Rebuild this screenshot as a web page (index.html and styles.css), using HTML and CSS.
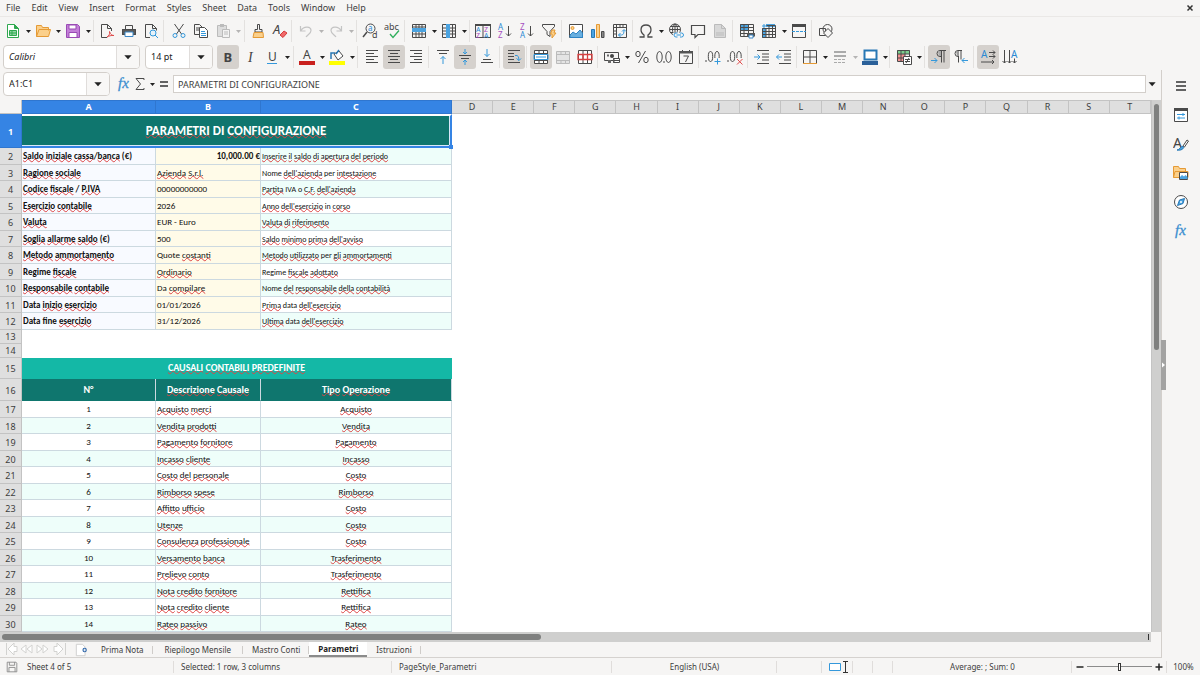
FILE: index.html
```html
<!DOCTYPE html>
<html lang="it">
<head>
<meta charset="utf-8">
<title>Parametri</title>
<link rel="stylesheet" href="styles.css">
</head>
<body>
<svg class="sprite" aria-hidden="true">
<symbol id="down" viewBox="0 0 8 16"><path class="fd" d="M2 7h5L4.500 10z"/></symbol>
<symbol id="new" viewBox="0 0 16 16"><path d="M2.500 1.500h7l4 4v9h-11z" fill="#fff" stroke="#2fa84f"/><path d="M9.500 1.500v4h4" fill="#2fa84f" stroke="#2fa84f"/><path d="M4.500 7.500h7v5h-7zM4.500 10h7M7 7.500v5" fill="#8fd6a2" stroke="#2fa84f"/></symbol>
<symbol id="open" viewBox="0 0 16 16"><path d="M1.500 13.500v-11h5l1 2h6v3M1.500 13.500l2.500-7h11.500l-2 7z" fill="#fbd08b" stroke="#e59a35"/></symbol>
<symbol id="save" viewBox="0 0 16 16"><path d="M1.500 1.500h11l2 2v11h-13z" fill="#c37fd8" stroke="#9a4bb5"/><path d="M4 2h7v4H4zM4 9.500h8v5H4z" fill="#fff" stroke="#9a4bb5"/></symbol>
<symbol id="pdf" viewBox="0 0 16 16"><path class="dk" d="M8 14.500H2.500v-13h6l4 4V8M8.500 1.500v4h4"/><path d="M8 14c2-1 3-3 2.500-5.500 1 3 2.500 4 4.500 4-3-.3-5 .5-7 1.500z" fill="none" stroke="#e04a4a"/></symbol>
<symbol id="print" viewBox="0 0 16 16"><path d="M1 6h14v6H1z" fill="#5a5a5a"/><path class="dk" d="M4.500 6V2.500h7V6M1.500 6.500h13v5h-13z"/><path d="M4 9h8v4.500H4z" fill="#fff" stroke="#3b88c8"/></symbol>
<symbol id="preview" viewBox="0 0 16 16"><path class="dk" d="M7 14.500H2.500v-13h7l4 4v2M9.500 1.500v4h4"/><circle cx="10" cy="10" r="3" fill="#e6f2fa" stroke="#3498db"/><path class="bl" d="M12 12l3 3"/></symbol>
<symbol id="cut" viewBox="0 0 16 16"><path class="dk" d="M3.500 1l7 10M12.500 1l-7 10"/><circle class="bl" cx="4" cy="12.500" r="2"/><circle class="bl" cx="12" cy="12.500" r="2"/></symbol>
<symbol id="copy" viewBox="0 0 16 16"><path class="dk" d="M6 11.500H1.500v-10h5l3 3M3 5h3M3 7h3"/><path d="M6.500 4.500h5l3 3v7h-8z" fill="#fff" stroke="#4a4a4a"/><path class="bl" d="M8 8.500h4M8 10.500h5M8 12.500h5"/></symbol>
<symbol id="paste" viewBox="0 0 16 16"><path d="M2.500 2.500h9v11h-9z" fill="#ddd" stroke="#bbb"/><path d="M5 1h4v3H5z" fill="#bbb"/><path d="M7.500 6.500h7v8h-7zM9 9h4M9 11h4" fill="#f3f3f3" stroke="#bbb"/></symbol>
<symbol id="clone" viewBox="0 0 16 16"><path class="dk" d="M7.500 1.500h2v5h2.500v2.500H5V6.500h2.500z"/><path d="M4 9.500h9l.5 5H3z" fill="#fbd08b" stroke="#e59a35"/></symbol>
<symbol id="clear" viewBox="0 0 16 16"><text x="1" y="11" class="gi" font-size="13">A</text><path d="M8 12l4-4 3 2-4 4.500z" fill="#f06a6a" stroke="#d63c3c"/></symbol>
<symbol id="undo" viewBox="0 0 16 16"><path class="lt" d="M2.500 3v5h5M3 7.500c3-5 10-4 10 0 0 3-3 4-5 6.500"/></symbol>
<symbol id="redo" viewBox="0 0 16 16"><path class="lt" d="M13.500 3v5h-5M13 7.500c-3-5-10-4-10 0 0 3 3 4 5 6.500"/></symbol>
<symbol id="find" viewBox="0 0 16 16"><circle class="dk" cx="8.500" cy="5.500" r="4.500"/><path class="dk" d="M5 9l-4 5" stroke-width="1.500"/><text x="6" y="8" class="gb" font-size="8">a</text><text x="10" y="15" class="gt" font-size="9">d</text></symbol>
<symbol id="spell" viewBox="0 0 16 16"><text x="0" y="7" class="gt" font-size="9">abc</text><path d="M6 11l3 3.500 6-7" fill="none" stroke="#2fae5c" stroke-width="1.300"/></symbol>
<symbol id="row" viewBox="0 0 16 16"><path class="dk" d="M1.500 1.500h13v13h-13zM1.500 11h13M5 1.500v13M8 1.500v13M11 1.500v13M1.500 4h13"/><path d="M1 5h14v4H1z" fill="#4ba3e0"/></symbol>
<symbol id="col" viewBox="0 0 16 16"><path class="dk" d="M1.500 1.500h13v13h-13zM1.500 5h13M1.500 8h13M1.500 11h13M11.500 1.500v13"/><path d="M5 1h4v14H5z" fill="#4ba3e0"/></symbol>
<symbol id="sort" viewBox="0 0 16 16"><path class="dk" d="M.5 2.500h15v12H.5zM8 2v13"/><path d="M0 1h16v2H0z" fill="#4a4a4a"/><text x="1" y="9" class="gb" font-size="7">A</text><text x="1" y="14.500" class="gv" font-size="7">Z</text><text x="9" y="9" class="gv" font-size="7">Z</text><text x="9" y="14.500" class="gb" font-size="7">A</text></symbol>
<symbol id="az" viewBox="0 0 16 16"><text x="1" y="7" class="gb" font-size="8">A</text><text x="1" y="15" class="gv" font-size="8">Z</text><path class="dk" d="M11.500 3v10M9 10.500l2.500 2.500 2.500-2.500"/></symbol>
<symbol id="za" viewBox="0 0 16 16"><text x="1" y="7" class="gv" font-size="8">Z</text><text x="1" y="15" class="gb" font-size="8">A</text><path class="dk" d="M11.500 3v10M9 10.500l2.500 2.500 2.500-2.500"/></symbol>
<symbol id="filter" viewBox="0 0 16 16"><path class="dk" d="M1.500 1.500h12v2l-4.500 5v5l-3-2v-3l-4.500-5z"/><path d="M11 7h3l-1 3h2l-4 5v-4H9.500z" fill="#fbd08b" stroke="#e59a35"/></symbol>
<symbol id="image" viewBox="0 0 16 16"><path d="M1.500 1.500h13v13h-13z" fill="#fff" stroke="#4a4a4a"/><path d="M2 12l3-3 3 2 4-4 2.500 3v4.500H2z" fill="#68afe0" stroke="#2d83c4"/><circle cx="4.500" cy="5" r="1.500" fill="#fbd08b" stroke="#e59a35"/></symbol>
<symbol id="chart" viewBox="0 0 16 16"><path d="M1.500 6.500h3v8h-3z" fill="#4ba3e0" stroke="#2878b5"/><path d="M6.500 1.500h3v13h-3z" fill="#fbd08b" stroke="#e59a35"/><path d="M11.500 8.500h2.500v6h-2.500z" fill="#888" stroke="#4a4a4a"/></symbol>
<symbol id="pivot" viewBox="0 0 16 16"><path class="dk" d="M1.500 1.500h13v13h-13zM1.500 4.500h13M4.500 1.500v13M8 2v2.500M11 2v2.500M2 8h2.500M2 11h2.500"/><path class="bl" d="M6.500 12h3c2 0 2.500-2 2.500-5M10 8.500L12 6.500l2 2M8.500 10l-2 2 2 2"/></symbol>
<symbol id="omega" viewBox="0 0 16 16"><path class="dk" d="M1.500 14h4.500v-2C2 9.500 1.500 2 8 2s6 7.500 2 10v2h4.500" stroke-width="1.300"/></symbol>
<symbol id="link" viewBox="0 0 16 16"><circle class="dk" cx="7" cy="6.500" r="5.500"/><path class="dk" d="M1.500 6.500h11M7 1v10M3 3.500h8M3 9.500h5"/><ellipse class="dk" cx="7" cy="6.500" rx="2.500" ry="5.500"/><path d="M5 9.500h11v5H5z" fill="#f6f5f4"/><path class="bl" d="M9.500 14H8a2 2 0 010-4h1.500M12 14h1.500a2 2 0 000-4H12M8.500 12h4.500"/></symbol>
<symbol id="comment" viewBox="0 0 16 16"><path class="dk" d="M1.500 2.500h13v9H8l-3 3v-3H1.500z" stroke-width="1.200"/></symbol>
<symbol id="page" viewBox="0 0 16 16"><path d="M2.500 1.500h7l4 4v9h-11z" fill="#d8d8d8" stroke="#bbb"/><path d="M9.500 1.500v4h4M4 10h8M4 12h8" fill="none" stroke="#bbb"/></symbol>
<symbol id="parea" viewBox="0 0 16 16"><path d="M1 1h9v6H1z" fill="#4ba3e0"/><path class="dk" d="M1.500 1.500h13v12h-13zM1.500 4.500h13M1.500 7.500h13M1.500 10.500h13M5 1.500v12M9.500 1.500v12"/><path d="M8 10h8v3.500H8z" fill="#555"/><path d="M10 12h4v3h-4z" fill="#fff" stroke="#3b88c8"/></symbol>
<symbol id="freeze" viewBox="0 0 16 16"><path d="M1 5h4v10H1zM5 1h9v3H5z" fill="#4ba3e0"/><path class="dk" d="M5.500 2.500h9v12h-13v-9h13M1.500 8.500h13M1.500 11.500h13M5 5v9.500M8 2.500v12M11.500 2.500v12"/><path class="bl" d="M1 3h4M3 1v4"/></symbol>
<symbol id="split" viewBox="0 0 16 16"><path class="dk" d="M1.500 2.500h13v12h-13z"/><path d="M1 1h14v3H1z" fill="#4a4a4a"/><path class="bl" d="M1 8.500h14" stroke-dasharray="3 1"/></symbol>
<symbol id="shapes" viewBox="0 0 16 16"><circle class="dk" cx="9.500" cy="6" r="4.500"/><path class="dk" d="M1.500 5.500h6v7h-6z"/><path d="M10 5.500l4.500 4.500L10 14.500 5.500 10z" fill="#f6f5f4" stroke="#4a4a4a"/></symbol>
<symbol id="bold" viewBox="0 0 16 16"><text x="3.500" y="12.500" class="gt" font-size="13" font-weight="700">B</text></symbol>
<symbol id="ital" viewBox="0 0 16 16"><text x="6" y="12.500" class="gs" font-size="14">I</text></symbol>
<symbol id="under" viewBox="0 0 16 16"><text x="4" y="11.500" class="gt" font-size="12">U</text><path class="bl" d="M3 14.500h10"/></symbol>
<symbol id="fcol" viewBox="0 0 16 16"><text x="4" y="10" class="gt" font-size="12">A</text><path d="M0 12h16v4H0z" fill="#c9211e"/></symbol>
<symbol id="hcol" viewBox="0 0 16 16"><path d="M0 12h16v4H0z" fill="#ff0"/><path d="M5 5l5-3 4 5-5 4z" fill="#fff" stroke="#4a4a4a"/><path d="M2 10V4h4M7 5l3-4" fill="none" stroke="#2878b5" stroke-width="1.500"/></symbol>
<symbol id="left" viewBox="0 0 16 16"><path class="dk" d="M2 1.500h12M2 4.500h8M2 7.500h12M2 10.500h8M2 13.500h12"/></symbol>
<symbol id="center" viewBox="0 0 16 16"><path class="dk" d="M2 1.500h12M4 4.500h8M2 7.500h12M4 10.500h8M2 13.500h12"/></symbol>
<symbol id="right" viewBox="0 0 16 16"><path class="dk" d="M2 1.500h12M6 4.500h8M2 7.500h12M6 10.500h8M2 13.500h12"/></symbol>
<symbol id="vtop" viewBox="0 0 16 16"><path class="dk" d="M2 1.500h12M4 4.500h8"/><path class="bl" d="M8 15V7.500M5.500 10L8 7.500l2.500 2.500"/></symbol>
<symbol id="vmid" viewBox="0 0 16 16"><path class="dk" d="M2 6.500h12M4 9.500h8"/><path class="bl" d="M8 0v5M6 3l2 2 2-2M8 16v-5M6 13l2-2 2 2"/></symbol>
<symbol id="vbot" viewBox="0 0 16 16"><path class="dk" d="M2 13.500h12M4 10.500h8"/><path class="bl" d="M8 0v7.500M5.500 5L8 7.500 10.500 5"/></symbol>
<symbol id="wrap" viewBox="0 0 16 16"><path class="dk" d="M2 1.500h12M2 4.500h6M2 7.500h6M2 10.500h6M2 13.500h12"/><path class="bl" d="M9 6.500h2q2 0 2 5M10.500 9.500l2.500 2 2-2"/></symbol>
<symbol id="merge" viewBox="0 0 16 16"><path d="M1.500 1.500h13v13h-13z" fill="#fff" stroke="#4a4a4a"/><path class="dk" d="M1.500 4.500h13M1.500 11.500h13M6 1.500v3M10.500 1.500v3M6 11.500v3M10.500 11.500v3"/><path class="bl" d="M1 5.500h14v5H1zM3 8h10"/></symbol>
<symbol id="merge2" viewBox="0 0 16 16"><path d="M1.500 2.500h13v12h-13zM1.500 5.500h13M1.500 11.500h13M6 2.500v3M10.500 2.500v3M6 11.500v3M10.500 11.500v3" fill="#e4e4e4" stroke="#bbb"/></symbol>
<symbol id="split2" viewBox="0 0 16 16"><path d="M1.500 1.500h13v13h-13z" fill="#fff" stroke="#4a4a4a"/><path class="dk" d="M6 1.500v13M10.500 1.500v13"/><path d="M1 5.500h14v5H1zM6 5v6M10.500 5v6" fill="none" stroke="#d84040" stroke-width="1.300"/></symbol>
<symbol id="money" viewBox="0 0 16 16"><path class="dk" d="M.5 3.500h14v8H.5z"/><path d="M3 5.500h2v2H3zM9 9h5v5H9zM4 11h3v3H4z" fill="#666"/><circle cx="8" cy="7" r="2" fill="#444"/><path d="M10 9.500h5.500v4H10z" fill="#fff" stroke="#4a4a4a"/><path class="dk" d="M10 11.500h5.500"/></symbol>
<symbol id="pct" viewBox="0 0 16 16"><ellipse class="dk" cx="4" cy="5" rx="2.200" ry="2.700"/><ellipse class="dk" cx="12" cy="11" rx="2.200" ry="2.700"/><path class="dk" d="M11.500 2l-7 12"/></symbol>
<symbol id="num" viewBox="0 0 16 16"><ellipse class="dk" cx="3.500" cy="8" rx="2.700" ry="5.500"/><path class="dk" d="M8 12v2"/><ellipse class="dk" cx="12.500" cy="8" rx="2.700" ry="5.500"/></symbol>
<symbol id="date" viewBox="0 0 16 16"><path class="dk" d="M1.500 2.500h13v12h-13zM4.500 1v3M11.500 1v3M5.500 7h5l-3 6"/><path d="M1 2h14v2.500H1z" fill="#555"/></symbol>
<symbol id="decadd" viewBox="0 0 16 16"><path class="dk" d="M1 11v2"/><ellipse class="dk" cx="5.500" cy="7.500" rx="2.200" ry="5"/><ellipse class="dk" cx="12" cy="7.500" rx="2.200" ry="5"/><path d="M9 9h7v7H9z" fill="#f6f5f4"/><path class="bl" d="M9.500 12.500h6M12.500 9.500v6"/></symbol>
<symbol id="decdel" viewBox="0 0 16 16"><path class="dk" d="M1 11v2"/><ellipse class="dk" cx="5.500" cy="7.500" rx="2.200" ry="5"/><ellipse class="dk" cx="12" cy="7.500" rx="2.200" ry="5"/><path d="M9 9h7v7H9z" fill="#f6f5f4"/><path d="M10 10l5.500 5.500M15.500 10L10 15.500" stroke="#e04a4a"/></symbol>
<symbol id="ind" viewBox="0 0 16 16"><path class="dk" d="M3 1.500h12M8 5h7M8 8h7M8 11h7M3 14.500h12"/><path class="bl" d="M0 8h6M3.500 5.500L6 8l-2.500 2.500"/></symbol>
<symbol id="outd" viewBox="0 0 16 16"><path class="dk" d="M3 1.500h12M8 5h7M8 8h7M8 11h7M3 14.500h12"/><path class="bl" d="M6 8H.5M3 5.500L.5 8 3 10.500"/></symbol>
<symbol id="border" viewBox="0 0 16 16"><path d="M1.500 14.500v-13h13v13M8 1.500v13M1.500 8h13" fill="none" stroke="#4a4a4a"/><path d="M1 14.500h14" stroke="#e59a35"/></symbol>
<symbol id="bstyle" viewBox="0 0 16 16"><path d="M2 3h12M2 7h12" stroke="#aaa" stroke-width="2"/><path d="M2 10.500h12M2 13.500h12" stroke="#aaa" stroke-dasharray="3 1"/></symbol>
<symbol id="bcol" viewBox="0 0 16 16"><path d="M2.500 1.500h12v9h-12z" fill="#fff" stroke="#2878b5" stroke-width="2"/><path d="M0 12h16v4H0z" fill="#2a6099"/></symbol>
<symbol id="cond" viewBox="0 0 16 16"><path d="M1 1h13v4H1z" fill="#7ccf8e"/><path d="M1 5h8v7H1z" fill="#f19090"/><path class="dk" d="M1.500 1.500h12v11h-12zM1.500 5h12M1.500 9h12M5 1.500v11M9 1.500v11"/><path d="M7.500 7.500h8v8h-8z" fill="#fff" stroke="#4a4a4a"/><path class="dk" d="M9 10.500h5M9 12.500h5M13 9l-3 5"/></symbol>
<symbol id="ltr" viewBox="0 0 16 16"><path class="dk" d="M15 1.500H9a3 3 0 000 6h1M10.500 1.500v12M13 1.500v12"/><path d="M7 2h3v5H8z" fill="#aaa"/><path class="bl" d="M0 11.500h6M3.500 9l2.500 2.500L3.500 14"/></symbol>
<symbol id="rtl" viewBox="0 0 16 16"><path class="dk" d="M9 1.500H5a3 3 0 000 6M5.500 1.500v12M8 1.500v9"/><path d="M3 2h3v5H4z" fill="#999"/><path class="bl" d="M15 11.500H9M11.500 9L9 11.500l2.500 2.500"/></symbol>
<symbol id="horz" viewBox="0 0 16 16"><text x="1" y="9" class="gb" font-size="10">A</text><path class="dk" d="M9 3.500h6M13 1.500l2 2-2 2M9 7.500h6M13 5.500l2 2-2 2M1 13h13M12 11l2 2-2 2"/></symbol>
<symbol id="vert" viewBox="0 0 16 16"><text x="9" y="9" class="gb" font-size="10">A</text><path class="dk" d="M2.500 1v13M.5 12l2 2 2-2M7.500 1v13M5.500 12l2 2 2-2M12.500 9.500V14M10.500 12l2 2 2-2"/></symbol>
<symbol id="fx" viewBox="0 0 16 16"><text x="2" y="12" class="fx" font-size="15" stroke="#3b8fd0" stroke-width=".3">fx</text></symbol>
<symbol id="sum" viewBox="0 0 16 16"><path class="dk" d="M12 4V2.500H4L8.500 8 4 13.500h8V12"/></symbol>
<symbol id="eq" viewBox="0 0 16 16"><path d="M4 6h8M4 10h8" stroke="#333" stroke-width="1.500"/></symbol>
<symbol id="menu" viewBox="0 0 16 16"><path d="M3 4h10M3 8h10M3 12h10" stroke="#333" stroke-width="1.500"/></symbol>
<symbol id="props" viewBox="0 0 16 16"><path d="M1.500 2.500h13v12h-13z" fill="#fff" stroke="#4a4a4a"/><path d="M1 1h14v3H1z" fill="#4a4a4a"/><path class="bl" d="M4 7.500h8M4 11h8M10 6v3M6 9.500v3"/></symbol>
<symbol id="styl" viewBox="0 0 16 16"><text x="0" y="12" class="gt" font-size="14">A</text><path d="M10 10l4-6 1.500 1-4 6z" fill="#fff" stroke="#4a4a4a"/><path d="M4 14c3 0 3-4 6-3.500 2 1-1 4.500-6 3.500z" fill="#4ba3e0" stroke="#2878b5"/></symbol>
<symbol id="gall" viewBox="0 0 16 16"><path d="M.5 12.500v-11h5l1 2h6v3M.5 12.500L2 6.500h13v6z" fill="#fbd08b" stroke="#e59a35"/><path d="M6.500 7.500h8v7h-8z" fill="#fff" stroke="#4a4a4a"/><path d="M7 12l2-2 2 1.500L12.500 10l2 2v2H7z" fill="#4ba3e0"/></symbol>
<symbol id="navi" viewBox="0 0 16 16"><circle cx="8" cy="8" r="6.500" fill="#fff" stroke="#4a4a4a"/><path d="M11.500 4.500L10 9.500l-5.500 2L6.500 6z" fill="#4ba3e0" stroke="#2878b5"/><circle cx="8" cy="8" r="1" fill="#fff"/></symbol>
<symbol id="disk" viewBox="0 0 16 16"><path d="M2.500 2.500h10l1 1v10h-11zM5 2.500v3.500h6V2.500M4.500 13.500v-5h7v5" fill="none" stroke="#888"/></symbol>
</svg>

<nav class="menubar">
<button>File</button><button>Edit</button><button>View</button><button>Insert</button><button>Format</button><button>Styles</button><button>Sheet</button><button>Data</button><button>Tools</button><button>Window</button><button>Help</button>
<button class="close" aria-label="Close"><svg viewBox="0 0 8 8"><path d="M1.500 1.500l5 5M6.500 1.500l-5 5" stroke="#333" stroke-width="1.500"/></svg></button>
</nav>

<div class="toolbar standard">
<div class="group"><button class="ic"><svg><use href="#new"/></svg></button><button class="dd"><svg><use href="#down"/></svg></button><button class="ic"><svg><use href="#open"/></svg></button><button class="dd"><svg><use href="#down"/></svg></button><button class="ic"><svg><use href="#save"/></svg></button><button class="dd"><svg><use href="#down"/></svg></button></div>
<div class="group"><button class="ic"><svg><use href="#pdf"/></svg></button><button class="ic"><svg><use href="#print"/></svg></button><button class="ic"><svg><use href="#preview"/></svg></button></div>
<div class="group"><button class="ic"><svg><use href="#cut"/></svg></button><button class="ic"><svg><use href="#copy"/></svg></button><button class="ic"><svg><use href="#paste"/></svg></button><button class="dd off"><svg><use href="#down"/></svg></button></div>
<div class="group"><button class="ic"><svg><use href="#clone"/></svg></button><button class="ic"><svg><use href="#clear"/></svg></button></div>
<div class="group"><button class="ic"><svg><use href="#undo"/></svg></button><button class="dd off"><svg><use href="#down"/></svg></button><button class="ic"><svg><use href="#redo"/></svg></button><button class="dd off"><svg><use href="#down"/></svg></button></div>
<div class="group"><button class="ic"><svg><use href="#find"/></svg></button><button class="ic"><svg><use href="#spell"/></svg></button></div>
<div class="group"><button class="ic"><svg><use href="#row"/></svg></button><button class="dd"><svg><use href="#down"/></svg></button><button class="ic"><svg><use href="#col"/></svg></button><button class="dd"><svg><use href="#down"/></svg></button></div>
<div class="group"><button class="ic"><svg><use href="#sort"/></svg></button><button class="ic"><svg><use href="#az"/></svg></button><button class="ic"><svg><use href="#za"/></svg></button><button class="ic"><svg><use href="#filter"/></svg></button></div>
<div class="group"><button class="ic"><svg><use href="#image"/></svg></button><button class="ic"><svg><use href="#chart"/></svg></button><button class="ic"><svg><use href="#pivot"/></svg></button></div>
<div class="group"><button class="ic"><svg><use href="#omega"/></svg></button><button class="dd"><svg><use href="#down"/></svg></button><button class="ic"><svg><use href="#link"/></svg></button><button class="ic"><svg><use href="#comment"/></svg></button><button class="ic"><svg><use href="#page"/></svg></button></div>
<div class="group"><button class="ic"><svg><use href="#parea"/></svg></button><button class="ic"><svg><use href="#freeze"/></svg></button><button class="dd"><svg><use href="#down"/></svg></button><button class="ic"><svg><use href="#split"/></svg></button></div>
<div class="group last"><button class="ic"><svg><use href="#shapes"/></svg></button></div>
</div>

<div class="toolbar formatting">
<div class="group combos">
<div class="combo font"><select aria-label="Font name"><option>Calibri</option></select><svg viewBox="0 0 24 24"><path class="fd" d="M8 10h8l-4 4.500z"/></svg></div>
<div class="combo size"><select aria-label="Font size"><option>14 pt</option></select><svg viewBox="0 0 24 24"><path class="fd" d="M8 10h8l-4 4.500z"/></svg></div>
</div>
<div class="group"><button class="ic on"><svg><use href="#bold"/></svg></button><button class="ic"><svg><use href="#ital"/></svg></button><button class="ic"><svg><use href="#under"/></svg></button><button class="dd"><svg><use href="#down"/></svg></button></div>
<div class="group"><button class="ic"><svg><use href="#fcol"/></svg></button><button class="dd"><svg><use href="#down"/></svg></button><button class="ic"><svg><use href="#hcol"/></svg></button><button class="dd"><svg><use href="#down"/></svg></button></div>
<div class="group"><button class="ic"><svg><use href="#left"/></svg></button><button class="ic on"><svg><use href="#center"/></svg></button><button class="ic"><svg><use href="#right"/></svg></button></div>
<div class="group"><button class="ic"><svg><use href="#vtop"/></svg></button><button class="ic on"><svg><use href="#vmid"/></svg></button><button class="ic"><svg><use href="#vbot"/></svg></button></div>
<div class="group"><button class="ic on"><svg><use href="#wrap"/></svg></button></div>
<div class="group"><button class="ic on"><svg><use href="#merge"/></svg></button><button class="ic"><svg><use href="#merge2"/></svg></button><button class="ic"><svg><use href="#split2"/></svg></button></div>
<div class="group"><button class="ic"><svg><use href="#money"/></svg></button><button class="dd"><svg><use href="#down"/></svg></button><button class="ic"><svg><use href="#pct"/></svg></button><button class="ic"><svg><use href="#num"/></svg></button><button class="ic"><svg><use href="#date"/></svg></button></div>
<div class="group"><button class="ic"><svg><use href="#decadd"/></svg></button><button class="ic"><svg><use href="#decdel"/></svg></button></div>
<div class="group"><button class="ic"><svg><use href="#ind"/></svg></button><button class="ic"><svg><use href="#outd"/></svg></button></div>
<div class="group"><button class="ic"><svg><use href="#border"/></svg></button><button class="dd"><svg><use href="#down"/></svg></button><button class="ic"><svg><use href="#bstyle"/></svg></button><button class="dd off"><svg><use href="#down"/></svg></button><button class="ic"><svg><use href="#bcol"/></svg></button><button class="dd"><svg><use href="#down"/></svg></button></div>
<div class="group"><button class="ic"><svg><use href="#cond"/></svg></button><button class="dd"><svg><use href="#down"/></svg></button></div>
<div class="group"><button class="ic on"><svg><use href="#ltr"/></svg></button><button class="ic"><svg><use href="#rtl"/></svg></button></div>
<div class="group last"><button class="ic on"><svg><use href="#horz"/></svg></button><button class="ic"><svg><use href="#vert"/></svg></button></div>
</div>

<div class="main">
<div class="work">
<div class="formula">
<div class="combo name"><input aria-label="Name box" value="A1:C1"><svg viewBox="0 0 24 24"><path class="fd" d="M8 10h8l-4 4.500z"/></svg></div>
<div class="fbtns"><button class="fi"><svg><use href="#fx"/></svg></button><button class="fi"><svg><use href="#sum"/></svg></button><button class="dd"><svg><use href="#down"/></svg></button><button class="fi"><svg><use href="#eq"/></svg></button></div>
<input class="fline" aria-label="Input line" value="PARAMETRI DI CONFIGURAZIONE">
<button class="expand" aria-label="Expand"><svg viewBox="0 0 16 16"><path class="fd" d="M3 6h8l-4 4.500z"/></svg></button>
</div>
<div class="sheet">
<div class="cells">
<table>
<colgroup><col class="ch"><col class="ca"><col class="cb"><col class="cc"><col span="17"></colgroup>
<thead><tr><th class="corner"></th><th class="sel">A</th><th class="sel">B</th><th class="sel">C</th><th>D</th><th>E</th><th>F</th><th>G</th><th>H</th><th>I</th><th>J</th><th>K</th><th>L</th><th>M</th><th>N</th><th>O</th><th>P</th><th>Q</th><th>R</th><th>S</th><th>T</th></tr></thead>
<tbody class="titles">
<tr><th class="sel">1</th><td colspan="3"><u>PARAMETRI</u> DI <u>CONFIGURAZIONE</u><i class="handle"></i></td></tr>
</tbody>
<tbody class="params">
<tr><th>2</th><td><u>Saldo</u> <u>iniziale</u> <u>cassa</u>/<u>banca</u> (€)</td><td class="amount">10,000.00 €</td><td><u>Inserire</u> <u>il</u> <u>saldo</u> <u>di</u> <u>apertura</u> <u>del</u> <u>periodo</u></td></tr>
<tr><th>3</th><td><u>Ragione</u> <u>sociale</u></td><td><u>Azienda</u> <u>S.r.l.</u></td><td>Nome <u>dell'azienda</u> per <u>intestazione</u></td></tr>
<tr><th>4</th><td><u>Codice</u> <u>fiscale</u> / <u>P.IVA</u></td><td>00000000000</td><td><u>Partita</u> IVA o <u>C.F.</u> <u>dell'azienda</u></td></tr>
<tr><th>5</th><td><u>Esercizio</u> <u>contabile</u></td><td>2026</td><td><u>Anno</u> <u>dell'esercizio</u> in <u>corso</u></td></tr>
<tr><th>6</th><td><u>Valuta</u></td><td>EUR - Euro</td><td><u>Valuta</u> <u>di</u> <u>riferimento</u></td></tr>
<tr><th>7</th><td><u>Soglia</u> <u>allarme</u> <u>saldo</u> (€)</td><td>500</td><td><u>Saldo</u> <u>minimo</u> <u>prima</u> <u>dell'avviso</u></td></tr>
<tr><th>8</th><td><u>Metodo</u> <u>ammortamento</u></td><td>Quote <u>costanti</u></td><td><u>Metodo</u> <u>utilizzato</u> per <u>gli</u> <u>ammortamenti</u></td></tr>
<tr><th>9</th><td>Regime <u>fiscale</u></td><td><u>Ordinario</u></td><td>Regime <u>fiscale</u> <u>adottato</u></td></tr>
<tr><th>10</th><td><u>Responsabile</u> <u>contabile</u></td><td>Da <u>compilare</u></td><td>Nome <u>del</u> <u>responsabile</u> <u>della</u> <u>contabilità</u></td></tr>
<tr><th>11</th><td>Data <u>inizio</u> <u>esercizio</u></td><td>01/01/2026</td><td><u>Prima</u> data <u>dell'esercizio</u></td></tr>
<tr><th>12</th><td>Data fine <u>esercizio</u></td><td>31/12/2026</td><td><u>Ultima</u> data <u>dell'esercizio</u></td></tr>
</tbody>
<tbody class="blank"><tr><th>13</th><td colspan="3"></td></tr><tr><th>14</th><td colspan="3"></td></tr></tbody>
<tbody class="heads">
<tr class="band"><th>15</th><td colspan="3"><u>CAUSALI</u> <u>CONTABILI</u> <u>PREDEFINITE</u></td></tr>
<tr class="head"><th>16</th><td>N°</td><td><u>Descrizione</u> <u>Causale</u></td><td><u>Tipo</u> <u>Operazione</u></td></tr>
</tbody>
<tbody class="list">
<tr><th>17</th><td>1</td><td><u>Acquisto</u> <u>merci</u></td><td><u>Acquisto</u></td></tr>
<tr><th>18</th><td>2</td><td><u>Vendita</u> <u>prodotti</u></td><td><u>Vendita</u></td></tr>
<tr><th>19</th><td>3</td><td><u>Pagamento</u> <u>fornitore</u></td><td><u>Pagamento</u></td></tr>
<tr><th>20</th><td>4</td><td><u>Incasso</u> <u>cliente</u></td><td><u>Incasso</u></td></tr>
<tr><th>21</th><td>5</td><td><u>Costo</u> <u>del</u> <u>personale</u></td><td><u>Costo</u></td></tr>
<tr><th>22</th><td>6</td><td><u>Rimborso</u> <u>spese</u></td><td><u>Rimborso</u></td></tr>
<tr><th>23</th><td>7</td><td><u>Affitto</u> <u>ufficio</u></td><td><u>Costo</u></td></tr>
<tr><th>24</th><td>8</td><td><u>Utenze</u></td><td><u>Costo</u></td></tr>
<tr><th>25</th><td>9</td><td><u>Consulenza</u> <u>professionale</u></td><td><u>Costo</u></td></tr>
<tr><th>26</th><td>10</td><td><u>Versamento</u> <u>banca</u></td><td><u>Trasferimento</u></td></tr>
<tr><th>27</th><td>11</td><td><u>Prelievo</u> <u>conto</u></td><td><u>Trasferimento</u></td></tr>
<tr><th>28</th><td>12</td><td><u>Nota</u> <u>credito</u> <u>fornitore</u></td><td><u>Rettifica</u></td></tr>
<tr><th>29</th><td>13</td><td><u>Nota</u> <u>credito</u> <u>cliente</u></td><td><u>Rettifica</u></td></tr>
<tr><th>30</th><td>14</td><td><u>Rateo</u> <u>passivo</u></td><td><u>Rateo</u></td></tr>
</tbody>
</table>
</div>
<div class="vscroll"><div class="thumb"></div></div>
</div>
<div class="hscroll"><div class="thumb"></div><div class="stop"></div></div>
<div class="tabs">
<svg class="navs" viewBox="0 0 60 14"><path d="M.5 1v12M8 1L2 7l6 6V9.500h3v-5H8zM20 3l-5 4 5 4zM26 3l-5 4 5 4zM31 3l5 4-5 4zM37 3l5 4-5 4zM51 1l6 6-6 6V9.500h-3v-5h3zM59.500 1v12" fill="#fff" stroke="#d2d2d0"/></svg>
<button class="add" aria-label="Add sheet"><svg viewBox="0 0 16 16"><path d="M1.500 1.500h7l3 3v10h-10z" fill="#fff" stroke="#ccc"/><circle cx="11" cy="8" r="2.500" fill="#2c64a8"/><path d="M9.500 8h3M11 6.500v3" stroke="#fff"/></svg></button>
<button class="tab">Prima Nota</button><button class="tab wide">Riepilogo Mensile</button><button class="tab">Mastro Conti</button><button class="tab cur">Parametri</button><button class="tab">Istruzioni</button>
</div>
</div>
<aside class="side">
<button><svg><use href="#menu"/></svg></button><button><svg><use href="#props"/></svg></button><button><svg><use href="#styl"/></svg></button><button><svg><use href="#gall"/></svg></button><button><svg><use href="#navi"/></svg></button><button><svg><use href="#fx"/></svg></button>
<div class="grip"><svg viewBox="0 0 5 8"><path d="M1 1.500L4 4 1 6.500z" fill="#fff"/></svg></div>
</aside>
</div>

<footer class="status">
<span class="disk"><svg><use href="#disk"/></svg></span><span>Sheet 4 of 5</span><span>Selected: 1 row, 3 columns</span><span>PageStyle_Parametri</span><span class="mid">English (USA)</span><span></span>
<span class="modes"><svg viewBox="0 0 24 14"><path d="M1.500 3.500h11v7h-11z" fill="#fff" stroke="#3498db"/><path d="M15 1.500h5M15 12.500h5M17.500 1.500v11" stroke="#333" fill="none"/></svg></span><span></span><span></span>
<span class="mid">Average: ; Sum: 0</span>
<span class="zoom"><button aria-label="Zoom out"><svg viewBox="0 0 8 8"><path d="M.5 4h7" stroke="#222" stroke-width="1.500"/></svg></button><input type="range" aria-label="Zoom" min="0" max="100" value="50"><button aria-label="Zoom in"><svg viewBox="0 0 8 8"><path d="M.5 4h7M4 .5v7" stroke="#222" stroke-width="1.500"/></svg></button></span>
<span class="pc">100%</span>
</footer>
</body>
</html>
```
FILE: styles.css
```css
* { box-sizing: border-box; }
body {
  margin: 0; height: 100vh; display: flex; flex-direction: column; overflow: hidden;
  background: #f6f5f4; color: #3d3d3d; font: 9px/12px "Noto Sans", sans-serif;
}
button, input, select { font: inherit; color: inherit; margin: 0; padding: 0; border: 0; background: none; outline: 0; appearance: none; border-radius: 0; }
svg { display: block; }
.sprite { display: none; }

/* glyph and stroke styles used by the icons */
.dk { fill: none; stroke: #4a4a4a; }
.bl { fill: none; stroke: #3498db; }
.lt { fill: none; stroke: #c4c4c4; stroke-width: 1.2; }
.fd { fill: #222; }
.gt { fill: #444; font-family: "Noto Sans", sans-serif; }
.gi { fill: #444; font-family: "Noto Sans", sans-serif; font-style: italic; }
.gb { fill: #2a8ad4; font-family: "Noto Sans", sans-serif; }
.gv { fill: #a64fc0; font-family: "Noto Sans", sans-serif; }
.gs { fill: #444; font-family: "Liberation Serif", serif; font-style: italic; }
.fx { fill: #3b8fd0; font-family: "Liberation Serif", serif; font-style: italic; }

.menubar { display: flex; flex: none; height: 17px; padding-left: 6px; gap: 11px; align-items: center; border-bottom: 1px solid #eae8e6; }
.menubar .close { margin-left: auto; width: 20px; display: flex; justify-content: center; }
.close svg { width: 8px; height: 8px; }

.toolbar { display: grid; flex: none; }
.standard { height: 27px; grid-template-columns: 94px 70px 81px 47px 65px 48px 65px 92px 71px 100px 79px 1fr; }
.formatting { height: 26px; grid-template-columns: 214px 80px 64px 71px 71px 27px 71px 101px 49px 49px 93px 35px 49px 1fr; }
.group { display: flex; align-items: center; justify-content: center; background: linear-gradient(#e3e1df, #e3e1df) right center / 1px 22px no-repeat; }
.group.last { justify-content: flex-start; padding-left: 3px; background: none; }
.group.combos { justify-content: flex-start; padding-left: 3px; gap: 5px; background: none; }
.ic { width: 22px; height: 24px; display: flex; align-items: center; justify-content: center; border-radius: 3px; }
.ic svg { width: 16px; height: 16px; }
.ic.on { background: #d5d1cd; }
.dd { width: 8px; }
.dd svg { width: 8px; height: 16px; }
.off { opacity: .3; }

.combo { display: grid; height: 24px; border: 1px solid #d3cfcb; border-radius: 4px; background: #fff; overflow: hidden; }
.combo > * { grid-row: 1; }
.combo select, .combo input { grid-column: 1 / 3; padding-left: 5px; width: 100%; color: #222; }
.combo > svg { grid-column: 2; width: 23px; height: 22px; background: #f8f7f6; border-left: 1px solid #e0dddb; pointer-events: none; }
.combo.font { width: 137px; grid-template-columns: 1fr 23px; font-style: italic; }
.combo.size { width: 68px; grid-template-columns: 1fr 23px; }
.combo.name { width: 107px; grid-template-columns: 1fr 23px; }

.main { flex: 1; display: flex; min-height: 0; }
.work { flex: 1; min-width: 0; display: flex; flex-direction: column; }
.formula { flex: none; height: 30px; display: flex; align-items: center; padding: 0 0 2px 3px; }
.fbtns { display: flex; align-items: center; width: 63px; padding-left: 6px; }
.fi svg { width: 16px; height: 16px; }
.fline { flex: 1; height: 18px; border: 1px solid #d3cfcb; background: #fff; padding-left: 4px; }
.expand { width: 15px; }
.expand svg { width: 14px; height: 16px; }

.sheet { flex: 1; display: flex; min-height: 0; background: #fff; }
.cells { flex: 1; min-width: 0; overflow: hidden; }
table { width: 100%; table-layout: fixed; border-collapse: separate; border-spacing: 0; }
.ch { width: 22px; }
.ca { width: 134px; }
.cb { width: 105px; }
.cc { width: 191px; }
th { padding: 0; font-weight: 400; background: #dfdfdf; border-right: 1px solid #c3c3c3; border-bottom: 1px solid #c3c3c3; }
thead th { height: 14px; line-height: 12px; border-top: 1px solid #c3c3c3; }
tbody th { padding-top: 2px; }
th.corner { background: #f6f5f4; border-top: 0; }
th.sel { background: #3584e4; color: #fff; font-weight: 700; border-color: #2f76cf; }
td { padding: 0 1px; height: 17px; font: 9px/12px Carlito, Lato, sans-serif; color: #111; border-right: 1px solid #ccd9e0; border-bottom: 1px solid #ccd9e0; white-space: nowrap; overflow: hidden; }
u { text-decoration: underline wavy #dd4444 1px; text-decoration-skip-ink: none; text-underline-offset: -1px; }
.params tr:nth-child(even) td, .list tr:nth-child(even) td { height: 16px; }
.params td:nth-child(2) { background: #f8faff; font-weight: 700; }
.params td:nth-child(3) { background: #fffbe8; }
.params td:nth-child(4) { font-size: 8px; }
.params tr:nth-child(odd) td:nth-child(4) { background: #eefefa; }
.params td.amount { text-align: right; font-weight: 700; padding: 0; }
.titles td { position: relative; height: 34px; background: #0f766e; color: #fff; text-align: center; font-size: 13px; font-weight: 700; overflow: visible; border: 2px solid #3584e4; border-top-color: #fff; border-left-width: 0; box-shadow: inset -1px -1px 0 #d9e8fa; }
.handle { position: absolute; right: -3px; bottom: -3px; width: 4px; height: 4px; background: #3584e4; }
.blank td { height: 14px; border: 0; }
.blank th { padding: 0; line-height: 12px; }
.band td { height: 21px; background: #14b8a6; color: #fff; font-size: 10px; font-weight: 700; text-align: center; border-color: #14b8a6; }
.head td { height: 22px; background: #0f766e; color: #fff; font-size: 10px; font-weight: 700; text-align: center; border-bottom-color: #0f766e; }
.list tr:nth-child(even) td { background: #eefefa; }
.list td:nth-child(2), .list td:nth-child(4) { text-align: center; }

.vscroll { width: 10px; background: #cfcfce; padding: 4px 2px; border-left: 1px solid #c4c4c4; }
.vscroll .thumb { height: 47%; border-radius: 3px; background: #7f807f; }
.hscroll { flex: none; height: 10px; margin-right: 10px; background: #cfcfce; padding: 2px; display: flex; justify-content: space-between; }
.hscroll .thumb { width: 47%; border-radius: 3px; background: #7f807f; }
.hscroll .stop { width: 1px; background: #333; }

.tabs { flex: none; height: 16px; display: flex; align-items: stretch; padding-left: 6px; font-size: 8px; border-bottom: 1px solid #d5d2cf; }
.navs { width: 60px; height: 14px; }
.add { width: 26px; padding-left: 8px; }
.add svg { width: 16px; height: 14px; }
.tab { padding: 0 9px; background: linear-gradient(#cfccc9, #cfccc9) right center / 1px 8px no-repeat; }
.tab.wide { padding: 0 12px; }
.tab.cur { background: #fff; font-weight: 700; color: #222; border-bottom: 2px solid #8b8b8b; }

.side { position: relative; flex: none; width: 39px; border-left: 1px solid #d3cfcb; display: flex; flex-direction: column; align-items: center; padding-top: 8px; gap: 13px; }
.side button svg { width: 16px; height: 16px; }
.grip { position: absolute; left: -1px; top: 46%; width: 5px; height: 50px; display: flex; align-items: center; background: #a3a3a2; }

.status { flex: none; height: 17px; display: grid; grid-template-columns: 20px 154px 218px 220px 165px 45px 31px 20px 20px 179px 95px 1fr; font-size: 8px; }
.status > span { padding-left: 7px; display: flex; align-items: center; background: linear-gradient(#e0dddb, #e0dddb) right center / 1px 12px no-repeat; }
.status .disk { padding-left: 4px; background: none; }
.disk svg { width: 16px; height: 14px; }
.status .mid { justify-content: center; padding: 0; }
.status .modes { padding-left: 6px; }
.modes svg { width: 24px; height: 14px; }
.status .zoom { padding: 0 4px; gap: 3px; }
.zoom svg { width: 8px; height: 8px; }
.zoom input { flex: 1; min-width: 0; height: 12px; background: linear-gradient(#8c8c8c, #8c8c8c) center / 100% 1px no-repeat; }
.zoom input::-webkit-slider-thumb { appearance: none; width: 3px; height: 8px; background: #fff; border: 1px solid #333; }
.status .pc { background: none; padding: 0; justify-content: center; }
```
